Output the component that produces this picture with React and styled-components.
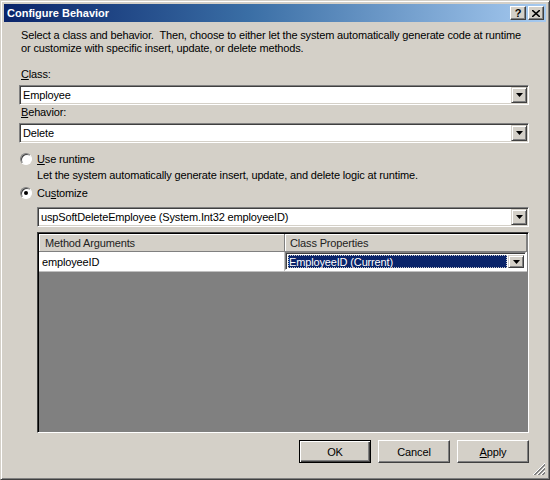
import styled, { createGlobalStyle } from "styled-components";

const GlobalStyle = createGlobalStyle`
  html, body {
    margin: 0;
    padding: 0;
    background: #d4d0c8;
  }
  * {
    box-sizing: border-box;
  }
`;

const FACE = "#d4d0c8";
const SHADOW = "#808080";
const DARK = "#404040";
const HILITE = "#ffffff";
const NAVY = "#0a246a";

const Window = styled.div`
  position: relative;
  width: 550px;
  height: 480px;
  display: flex;
  flex-direction: column;
  padding: 3px;
  background: ${FACE};
  border: 1px solid;
  border-color: ${FACE} ${DARK} ${DARK} ${FACE};
  box-shadow: inset 1px 1px ${HILITE}, inset -1px -1px ${SHADOW};
  font-family: "Liberation Sans", Arial, sans-serif;
  font-size: 11px;
  letter-spacing: -0.15px;
  color: #000;
`;

const TitleBar = styled.div`
  height: 18px;
  flex: none;
  display: flex;
  align-items: center;
  justify-content: space-between;
  padding: 0 2px 0 3px;
  background: linear-gradient(to right, ${NAVY} 0%, #3a6ea5 45%, #a6caf0 100%);
`;

const TitleText = styled.span`
  color: #fff;
  font-weight: bold;
  font-size: 11px;
  letter-spacing: 0;
  font-family: "Liberation Sans", Tahoma, sans-serif;
`;

const CaptionButtons = styled.div`
  display: flex;
  gap: 2px;
`;

const CaptionButton = styled.div`
  width: 16px;
  height: 14px;
  display: flex;
  align-items: center;
  justify-content: center;
  background: ${FACE};
  border: 1px solid;
  border-color: ${HILITE} ${DARK} ${DARK} ${HILITE};
  box-shadow: inset -1px -1px ${SHADOW};
  font-weight: bold;
  font-size: 11px;
  line-height: 1;
  color: #000;
`;

const Body = styled.div`
  flex: 1;
  display: flex;
  flex-direction: column;
  padding: 7px 17px 13px 15px;
  min-height: 0;
`;

const Intro = styled.p`
  margin: 0 0 0 2px;
  line-height: 13px;
  white-space: nowrap;
`;

const FieldLabel = styled.div`
  margin: ${(p) => p.$top}px 0 4px 2px;
  line-height: 13px;
`;

const Key = styled.span`
  text-decoration: underline;
`;

const ComboBox = styled.div`
  height: 20px;
  flex: none;
  display: flex;
  align-items: stretch;
  margin-left: ${(p) => p.$indent || 0}px;
  margin-top: ${(p) => p.$top || 0}px;
  background: #fff;
  border: 1px solid;
  border-color: ${SHADOW} ${HILITE} ${HILITE} ${SHADOW};
  box-shadow: inset 1px 1px ${DARK}, inset -1px -1px ${FACE};
  padding: 1px;
`;

const ComboText = styled.div`
  flex: 1;
  display: flex;
  align-items: center;
  padding-left: 2px;
  white-space: nowrap;
  overflow: hidden;
`;

const ArrowButton = styled.div`
  width: 16px;
  flex: none;
  display: flex;
  align-items: center;
  justify-content: center;
  background: ${FACE};
  border: 1px solid;
  border-color: ${FACE} ${DARK} ${DARK} ${FACE};
  box-shadow: inset 1px 1px ${HILITE}, inset -1px -1px ${SHADOW};
`;

const Arrow = () => (
  <svg width="7" height="4" viewBox="0 0 7 4">
    <path d="M0 0h7L3.5 4z" fill="#000" />
  </svg>
);

const Combo = ({ children, indent, top }) => (
  <ComboBox $indent={indent} $top={top}>
    <ComboText>{children}</ComboText>
    <ArrowButton>
      <Arrow />
    </ArrowButton>
  </ComboBox>
);

const RadioRow = styled.label`
  display: flex;
  align-items: center;
  gap: 5px;
  height: 13px;
  margin: ${(p) => p.$top}px 0 0 1px;
`;

const RadioDot = styled.span`
  width: 12px;
  height: 12px;
  border-radius: 50%;
  flex: none;
  display: flex;
  align-items: center;
  justify-content: center;
  background: #fff;
  border: 1px solid;
  border-color: ${SHADOW} ${HILITE} ${HILITE} ${SHADOW};
  box-shadow: inset 1px 1px ${DARK};

  &::after {
    content: "";
    width: 4px;
    height: 4px;
    border-radius: 50%;
    background: ${(p) => (p.$checked ? "#000" : "transparent")};
  }
`;

const Hint = styled.div`
  margin: 4px 0 0 18px;
  line-height: 13px;
`;

const Grid = styled.div`
  flex: 1;
  margin: 5px 0 0 18px;
  display: flex;
  flex-direction: column;
  background: ${SHADOW};
  border: 1px solid;
  border-color: ${DARK} ${HILITE} ${HILITE} ${DARK};
  box-shadow: inset 1px 1px #000;
  padding: 1px 1px 0 1px;
`;

const GridRow = styled.div`
  display: grid;
  grid-template-columns: 246px 1fr;
  height: ${(p) => p.$height}px;
  background: ${(p) => (p.$header ? FACE : "#fff")};
  border-bottom: 1px solid ${(p) => (p.$header ? SHADOW : "#c0c0c0")};
`;

const HeaderCell = styled.div`
  display: flex;
  align-items: center;
  padding-left: ${(p) => p.$pad}px;
  border-right: 1px solid ${SHADOW};
  box-shadow: inset 1px 1px ${HILITE};
  color: #222;
`;

const DataCell = styled.div`
  display: flex;
  align-items: center;
  padding-left: 3px;
  border-right: 1px solid #c0c0c0;
`;

const EditCell = styled.div`
  display: flex;
  align-items: stretch;
  padding: 0 1px 1px 0;
`;

const EditCombo = styled.div`
  flex: 1;
  display: flex;
  background: #fff;
  border: 1px solid;
  border-color: ${SHADOW} ${HILITE} ${HILITE} ${SHADOW};
  box-shadow: inset 1px 1px ${DARK};
  padding: 2px 1px 1px 2px;
`;

const Selected = styled.div`
  flex: 1;
  display: flex;
  align-items: center;
  padding-left: 1px;
  margin-right: 1px;
  background: ${NAVY};
  color: #fff;
  outline: 1px dotted #c8c8c8;
  outline-offset: -1px;
  white-space: nowrap;
`;

const Footer = styled.div`
  display: flex;
  justify-content: flex-end;
  gap: 7px;
  margin-top: 7px;
  flex: none;
`;

const Button = styled.div`
  width: 72px;
  height: 23px;
  display: flex;
  align-items: center;
  justify-content: center;
  background: ${FACE};
  border: 1px solid;
  border-color: ${(p) =>
    p.$default ? "#000" : `${HILITE} ${DARK} ${DARK} ${HILITE}`};
  box-shadow: ${(p) =>
    p.$default
      ? `inset 1px 1px ${HILITE}, inset -1px -1px ${DARK}, inset -2px -2px ${SHADOW}`
      : `inset -1px -1px ${SHADOW}`};
`;

const Grip = styled.svg`
  position: absolute;
  right: 4px;
  bottom: 4px;
`;

// three diagonal ridges in the bottom-right corner
const SizeGrip = () => (
  <Grip width="12" height="12" viewBox="0 0 12 12">
    {[0, 4, 8].map((o) => (
      <g key={o}>
        <line x1={o} y1="12" x2="12" y2={o} stroke={HILITE} />
        <line x1={o + 1} y1="12" x2="12" y2={o + 1} stroke={SHADOW} />
        <line x1={o + 2} y1="12" x2="12" y2={o + 2} stroke={SHADOW} />
      </g>
    ))}
  </Grip>
);

const CloseGlyph = () => (
  <svg width="8" height="7" viewBox="0 0 8 7">
    <path d="M0 0l8 7M8 0L0 7" stroke="#000" strokeWidth="1.6" />
  </svg>
);

export default function App() {
  return (
    <>
      <GlobalStyle />
      <Window>
        <TitleBar>
          <TitleText>Configure Behavior</TitleText>
          <CaptionButtons>
            <CaptionButton>?</CaptionButton>
            <CaptionButton>
              <CloseGlyph />
            </CaptionButton>
          </CaptionButtons>
        </TitleBar>

        <Body>
          <Intro>
            Select a class and behavior.&nbsp; Then, choose to either let the
            system automatically generate code at runtime
            <br />
            or customize with specific insert, update, or delete methods.
          </Intro>

          <FieldLabel $top={13}>
            <Key>C</Key>lass:
          </FieldLabel>
          <Combo>Employee</Combo>

          <FieldLabel $top={1}>
            <Key>B</Key>ehavior:
          </FieldLabel>
          <Combo>Delete</Combo>

          <RadioRow $top={9}>
            <RadioDot />
            <span>
              <Key>U</Key>se runtime
            </span>
          </RadioRow>
          <Hint>
            Let the system automatically generate insert, update, and delete
            logic at runtime.
          </Hint>
          <RadioRow $top={4}>
            <RadioDot $checked />
            <span>
              Cu<Key>s</Key>tomize
            </span>
          </RadioRow>

          <Combo indent={18} top={8}>
            uspSoftDeleteEmployee (System.Int32 employeeID)
          </Combo>

          <Grid>
            <GridRow $header $height={18}>
              <HeaderCell $pad={6}>Method Arguments</HeaderCell>
              <HeaderCell $pad={5}>Class Properties</HeaderCell>
            </GridRow>
            <GridRow $height={20}>
              <DataCell>employeeID</DataCell>
              <EditCell>
                <EditCombo>
                  <Selected>EmployeeID (Current)</Selected>
                  <ArrowButton>
                    <Arrow />
                  </ArrowButton>
                </EditCombo>
              </EditCell>
            </GridRow>
          </Grid>

          <Footer>
            <Button $default>OK</Button>
            <Button>Cancel</Button>
            <Button>
              <span>
                <Key>A</Key>pply
              </span>
            </Button>
          </Footer>
        </Body>
        <SizeGrip />
      </Window>
    </>
  );
}
